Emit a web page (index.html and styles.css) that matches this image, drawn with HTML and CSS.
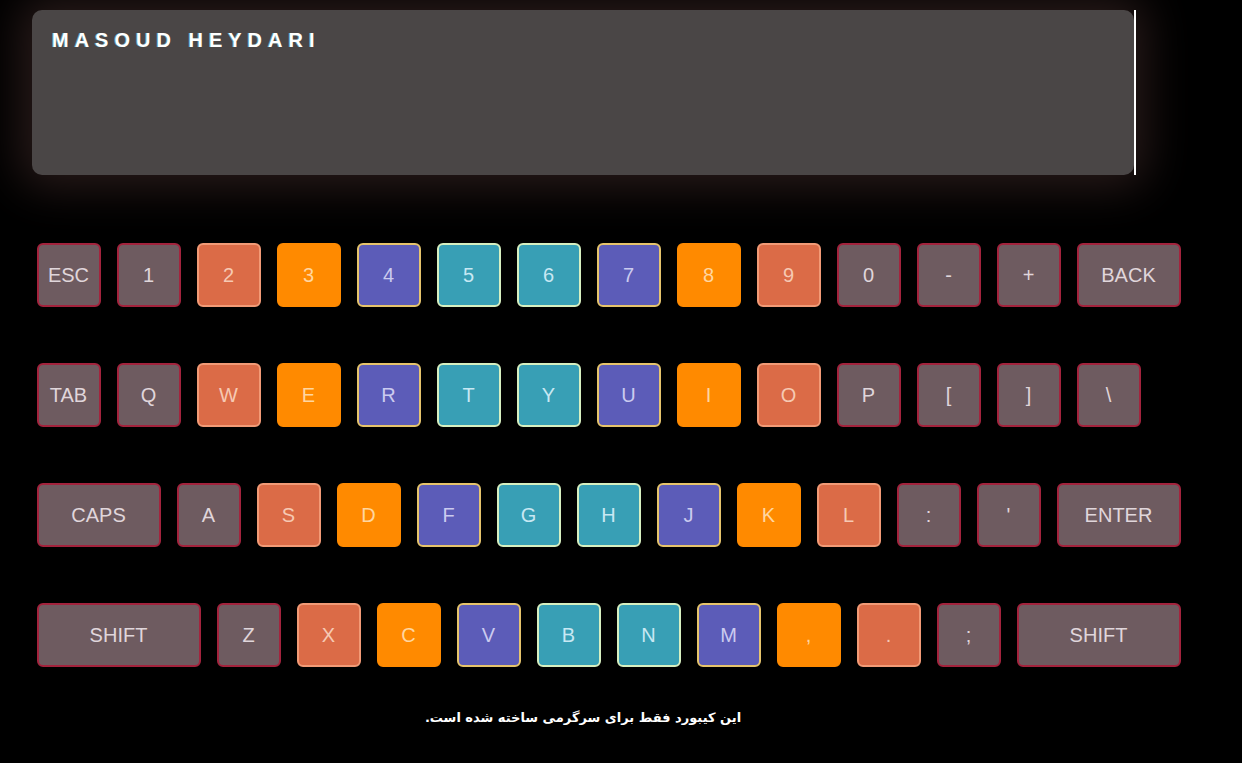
FILE: index.html
```html
<!DOCTYPE html>
<html lang="en">
<head>
<meta charset="utf-8">
<title>Keyboard</title>
<link rel="stylesheet" href="styles.css">
</head>
<body>
<div class="wrap">
  <div class="screen"><span class="typed">MASOUD HEYDARI</span></div>
  <div class="keyboard">
    <div class="row">
      <div class="key gray">ESC</div>
      <div class="key gray">1</div>
      <div class="key coral">2</div>
      <div class="key orange">3</div>
      <div class="key purple">4</div>
      <div class="key teal">5</div>
      <div class="key teal">6</div>
      <div class="key purple">7</div>
      <div class="key orange">8</div>
      <div class="key coral">9</div>
      <div class="key gray">0</div>
      <div class="key gray">-</div>
      <div class="key gray">+</div>
      <div class="key gray w104">BACK</div>
    </div>
    <div class="row">
      <div class="key gray">TAB</div>
      <div class="key gray">Q</div>
      <div class="key coral">W</div>
      <div class="key orange">E</div>
      <div class="key purple">R</div>
      <div class="key teal">T</div>
      <div class="key teal">Y</div>
      <div class="key purple">U</div>
      <div class="key orange">I</div>
      <div class="key coral">O</div>
      <div class="key gray">P</div>
      <div class="key gray">[</div>
      <div class="key gray">]</div>
      <div class="key gray">\</div>
    </div>
    <div class="row">
      <div class="key gray w124">CAPS</div>
      <div class="key gray">A</div>
      <div class="key coral">S</div>
      <div class="key orange">D</div>
      <div class="key purple">F</div>
      <div class="key teal">G</div>
      <div class="key teal">H</div>
      <div class="key purple">J</div>
      <div class="key orange">K</div>
      <div class="key coral">L</div>
      <div class="key gray">:</div>
      <div class="key gray">'</div>
      <div class="key gray w124">ENTER</div>
    </div>
    <div class="row">
      <div class="key gray w164">SHIFT</div>
      <div class="key gray">Z</div>
      <div class="key coral">X</div>
      <div class="key orange">C</div>
      <div class="key purple">V</div>
      <div class="key teal">B</div>
      <div class="key teal">N</div>
      <div class="key purple">M</div>
      <div class="key orange">,</div>
      <div class="key coral">.</div>
      <div class="key gray">;</div>
      <div class="key gray w164">SHIFT</div>
    </div>
  </div>
  <p class="note" dir="rtl">این کیبورد فقط برای سرگرمی ساخته شده است.</p>
</div>
</body>
</html>
```
FILE: styles.css
```css
html, body {
  margin: 0;
  background: #000;
}
body {
  padding: 10px 0 0 32px;
  font-family: "Liberation Sans", Arial, sans-serif;
}
.wrap {
  width: 1102px;
}
.screen {
  position: relative;
  box-sizing: border-box;
  width: 1102px;
  height: 165px;
  padding: 19px 20px;
  background: #4a4646;
  border-radius: 10px;
  box-shadow: 0 0 45px 12px rgba(48, 32, 30, 0.85);
}
.screen::after {
  content: "";
  position: absolute;
  top: 0;
  right: -2px;
  width: 2px;
  height: 165px;
  background: #fff;
}
.typed {
  color: #fff;
  font-weight: bold;
  font-size: 20px;
  letter-spacing: 6px;
  text-shadow: -1px 0 rgba(120, 230, 255, 0.55);
}
.keyboard {
  margin-top: 68px;
  padding-left: 5px;
  display: flex;
  flex-direction: column;
  gap: 56px;
  width: 1160px;
}
.row {
  display: flex;
  gap: 16px;
}
.key {
  box-sizing: border-box;
  width: 64px;
  height: 64px;
  border: 2px solid;
  border-radius: 6px;
  display: flex;
  align-items: center;
  justify-content: center;
  padding-right: 1px;
  font-size: 20px;
  flex: none;
}
.w104 { width: 104px; }
.w124 { width: 124px; }
.w164 { width: 164px; }
.gray {
  background: #6e5b60;
  border-color: #a3233d;
  color: #e0d6db;
}
.coral {
  background: #db6b47;
  border-color: #f29a76;
  color: #f6c9b3;
}
.orange {
  background: #ff8a00;
  border-color: #ff8a00;
  color: #ffd6a0;
}
.purple {
  background: #5c5cb8;
  border-color: #e6c46c;
  color: #cbcbef;
}
.teal {
  background: #389fb5;
  border-color: #d6efc0;
  color: #c8e8f3;
}
.note {
  margin: 43px 0 0;
  text-align: center;
  color: #fff;
  font-weight: bold;
  font-size: 13px;
  font-family: "DejaVu Sans", "Noto Sans", sans-serif;
}
```
